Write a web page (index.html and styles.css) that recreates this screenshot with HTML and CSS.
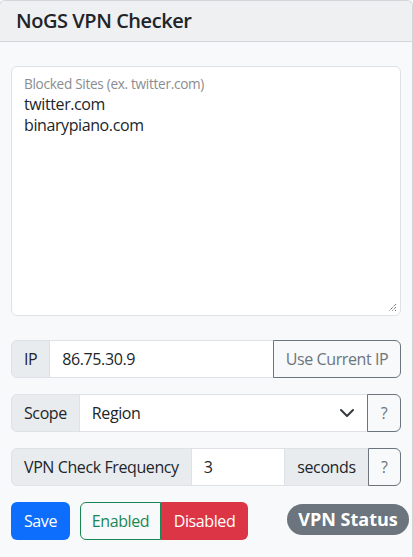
FILE: index.html
```html
<!DOCTYPE html>
<html>
<head>
<meta charset="utf-8">
<link rel="stylesheet" href="styles.css">
</head>
<body>
<div class="card">
  <div class="card-header"><h5 class="title">NoGS VPN Checker</h5></div>
  <div class="card-body">
    <div class="floating">
      <label class="float-label">Blocked Sites (ex. twitter.com)</label>
      <div class="sites">twitter.com<br>binarypiano.com</div>
      <svg class="grip" width="9" height="9" viewBox="0 0 9 9"><path d="M8 1L1 8M8 4L4 8M8 7L7 8" stroke="#444" stroke-width="1" stroke-dasharray="1 1" fill="none"/></svg>
    </div>

    <div class="group mb4">
      <span class="addon">IP</span>
      <span class="field grow">86.75.30.9</span>
      <span class="btn-outline ip">Use Current IP</span>
    </div>

    <div class="group mb3">
      <span class="addon">Scope</span>
      <span class="field grow select">Region
        <svg class="chev" width="16" height="16" viewBox="0 0 16 16"><path d="M2 5l6 6 6-6" stroke="#343a40" stroke-width="2" stroke-linecap="round" stroke-linejoin="round" fill="none"/></svg>
      </span>
      <span class="btn-outline q">?</span>
    </div>

    <div class="group mb3">
      <span class="addon">VPN Check Frequency</span>
      <span class="field freq">3</span>
      <span class="addon mid">seconds</span>
      <span class="btn-outline q">?</span>
    </div>

    <div class="actions">
      <span class="btn-save">Save</span>
      <div class="toggle">
        <span class="t-en">Enabled</span>
        <span class="t-dis">Disabled</span>
      </div>
      <span class="badge">VPN Status</span>
    </div>
  </div>
</div>
</body>
</html>
```

FILE: styles.css
```css
* { box-sizing: border-box; }
html, body { margin: 0; padding: 0; background: #f8f9fa; }
body {
  font-family: "Segoe UI", "Open Sans", "Noto Sans", sans-serif;
  font-size: 16px;
  letter-spacing: -0.4px;
  color: #212529;
  width: 413px;
  height: 557px;
  overflow: hidden;
}
.card {
  margin-left: -1px;
  width: 414px;
  height: 557px;
  border: 1px solid #d3d5d8;
  border-bottom: 0;
  border-radius: 6px 6px 0 0;
  background: #f8f9fa;
}
.card-header {
  background: #eff0f2;
  border-bottom: 1px solid #d3d5d8;
  padding: 8px 16px;
  border-radius: 6px 6px 0 0;
}
.title {
  margin: 0;
  font-size: 20px;
  font-weight: 600;
  line-height: 24px;
  letter-spacing: -0.45px;
}
.card-body { padding: 24px 11px 0 11px; }
.floating {
  position: relative;
  height: 250px;
  background: #fff;
  border: 1px solid #dee2e6;
  border-radius: 6px;
  padding: 7px 12px;
  margin-bottom: 24px;
}
.float-label {
  display: block;
  font-size: 13.6px;
  color: #8a8d90;
  line-height: 20px;
  letter-spacing: -0.3px;
}
.sites { line-height: 21px; font-size: 16px; }
.grip { position: absolute; right: 3px; bottom: 3px; }
.group {
  display: flex;
  height: 38px;
}
.mb4 { margin-bottom: 16px; }
.mb3 { margin-bottom: 16px; }
.addon {
  display: flex;
  align-items: center;
  padding: 0 12px;
  background: #e9ecef;
  border: 1px solid #dee2e6;
  border-radius: 6px 0 0 6px;
  white-space: nowrap;
}
.addon.mid { border-radius: 0; margin-left: -1px; }
.field {
  display: flex;
  align-items: center;
  padding: 0 12px;
  background: #fff;
  border: 1px solid #dee2e6;
  margin-left: -1px;
}
.grow { flex: 1; }
.freq { width: 96px; }
.select { justify-content: space-between; }
.btn-outline {
  display: flex;
  align-items: center;
  justify-content: center;
  padding: 0 12px;
  border: 1px solid #6c757d;
  color: #6c757d;
  border-radius: 0 6px 6px 0;
  margin-left: -1px;
  white-space: nowrap;
}
.btn-outline.ip { width: 128px; padding: 0; }
.btn-outline.q { width: 34px; padding: 0; }
.actions {
  display: flex;
  align-items: center;
  height: 38px;
}
.btn-save {
  display: flex;
  align-items: center;
  justify-content: center;
  height: 38px;
  width: 59px;
  background: #0d6efd;
  color: #fff;
  border-radius: 6px;
}
.toggle { display: flex; margin-left: 10px; height: 38px; }
.t-en {
  display: flex;
  align-items: center;
  justify-content: center;
  border: 1px solid #198754;
  color: #198754;
  border-radius: 6px 0 0 6px;
  width: 81px;
}
.t-dis {
  display: flex;
  align-items: center;
  justify-content: center;
  background: #dc3545;
  color: #fff;
  border-radius: 0 6px 6px 0;
  width: 87px;
}
.badge {
  margin-left: auto;
  margin-right: -8px;
  background: #6c757d;
  color: #fff;
  font-weight: 700;
  font-size: 18px;
  letter-spacing: 0;
  width: 122px;
  text-align: center;
  height: 31px;
  line-height: 31px;
  border-radius: 16px;
  margin-top: -3px;
}
```
